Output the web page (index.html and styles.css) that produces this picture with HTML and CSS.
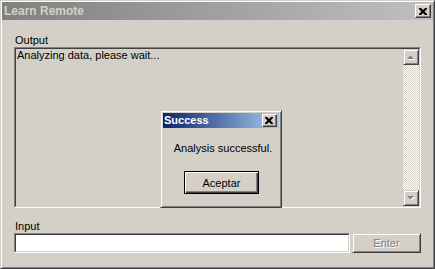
FILE: index.html
```html
<!DOCTYPE html>
<html>
<head>
<meta charset="utf-8">
<link rel="stylesheet" href="styles.css">
</head>
<body>
<div class="window">
  <div class="titlebar">
    <span class="title">Learn Remote</span>
    <div class="cap-btn">
      <svg width="8" height="7" viewBox="0 0 8 7"><path d="M0 0h2l2 2 2-2h2v1l-2.5 2.5L8 6v1H6L4 5 2 7H0V6l2.5-2.5L0 1z" fill="#000"/></svg>
    </div>
  </div>
  <div class="body">
    <div class="label">Output</div>
    <div class="sunken output">
      <div class="sunken-inner output-inner">
        <div class="output-text">Analyzing data, please wait...</div>
        <div class="scrollbar">
          <div class="raised sb-btn">
            <svg width="8" height="5" viewBox="0 0 8 5"><path d="M1 5h7L4.5 1.5z" fill="#fff"/><path d="M0 4h7L3.5 0.5z" fill="#808080"/></svg>
          </div>
          <div class="sb-track"></div>
          <div class="raised sb-btn">
            <svg width="8" height="5" viewBox="0 0 8 5"><path d="M1 1h7L4.5 4.5z" fill="#fff"/><path d="M0 0h7L3.5 3.5z" fill="#808080"/></svg>
          </div>
        </div>
      </div>
    </div>
    <div class="label input-label">Input</div>
    <div class="input-row">
      <div class="sunken input"><div class="sunken-inner input-inner"></div></div>
      <div class="raised btn disabled">Enter</div>
    </div>
  </div>

  <div class="dialog">
    <div class="dlg-title">
      <span class="dlg-title-text">Success</span>
      <div class="cap-btn dlg-cap">
        <svg width="8" height="7" viewBox="0 0 8 7"><path d="M0 0h2l2 2 2-2h2v1l-2.5 2.5L8 6v1H6L4 5 2 7H0V6l2.5-2.5L0 1z" fill="#000"/></svg>
      </div>
    </div>
    <div class="dlg-body">
      <div class="dlg-msg">Analysis successful.</div>
      <div class="default-btn">Aceptar</div>
    </div>
  </div>
</div>
</body>
</html>
```

FILE: styles.css
```css
html, body {
  margin: 0;
  padding: 0;
  background: #d4d0c8;
}
body {
  font-family: "Liberation Sans", Arial, sans-serif;
  font-size: 11px;
  color: #000;
}
.window {
  position: relative;
  width: 435px;
  height: 269px;
  box-sizing: border-box;
  border: 1px solid;
  border-color: #d4d0c8 #404040 #404040 #d4d0c8;
  box-shadow: inset 1px 1px #fff, inset -1px -1px #808080;
  padding: 1px;
  background: #d4d0c8;
  display: flex;
  flex-direction: column;
}
.titlebar {
  height: 18px;
  display: flex;
  align-items: center;
  justify-content: space-between;
  background: linear-gradient(to right, #808080, #c0c0c0);
  padding: 0 2px 0 2px;
}
.title {
  color: #d4d0c8;
  font-weight: bold;
  font-size: 12px;
  line-height: 18px;
}
.cap-btn {
  width: 16px;
  height: 14px;
  box-sizing: border-box;
  background: #d4d0c8;
  border: 1px solid;
  border-color: #fff #404040 #404040 #fff;
  box-shadow: inset -1px -1px #808080;
  display: flex;
  align-items: center;
  justify-content: center;
}
.cap-btn svg {
  display: block;
  margin-left: -1px;
}
.body {
  flex: 1;
  display: flex;
  flex-direction: column;
  padding: 14px 12px 0 12px;
}
.label {
  height: 13px;
  line-height: 13px;
  padding-left: 1px;
}
.input-label {
  margin-top: 12px;
}
.sunken {
  border: 1px solid;
  border-color: #808080 #fff #fff #808080;
}
.sunken-inner {
  border: 1px solid;
  border-color: #404040 #d4d0c8 #d4d0c8 #404040;
  height: 100%;
  box-sizing: border-box;
}
.raised {
  box-sizing: border-box;
  background: #d4d0c8;
  border: 1px solid;
  border-color: #d4d0c8 #404040 #404040 #d4d0c8;
  box-shadow: inset 1px 1px #fff, inset -1px -1px #808080;
}
.output {
  height: 161px;
  box-sizing: border-box;
}
.output-inner {
  display: flex;
}
.output-text {
  flex: 1;
  padding: 0 1px;
  line-height: 13px;
}
.scrollbar {
  width: 16px;
  display: flex;
  flex-direction: column;
}
.sb-btn {
  width: 16px;
  height: 16px;
  display: flex;
  align-items: center;
  justify-content: center;
}
.sb-track {
  flex: 1;
  background: repeating-conic-gradient(#fff 0 25%, #d4d0c8 0 50%) 0 0 / 2px 2px;
}
.input-row {
  display: flex;
  gap: 2px;
  height: 20px;
}
.input {
  flex: 1;
}
.input-inner {
  background: #fff;
}
.btn {
  width: 69px;
  display: flex;
  align-items: center;
  justify-content: center;
}
.disabled {
  color: #808080;
  text-shadow: 1px 1px #fff;
}
.dialog {
  position: absolute;
  left: 159px;
  top: 109px;
  width: 122px;
  height: 98px;
  box-sizing: border-box;
  background: #d4d0c8;
  border: 1px solid;
  border-color: #d4d0c8 #404040 #404040 #d4d0c8;
  box-shadow: inset 1px 1px #fff, inset -1px -1px #808080;
  padding: 2px;
  display: flex;
  flex-direction: column;
}
.dlg-title {
  height: 15px;
  display: flex;
  align-items: center;
  justify-content: space-between;
  background: linear-gradient(to right, #0a246a, #a6caf0);
  padding: 0 2px 0 1px;
}
.dlg-title-text {
  color: #fff;
  font-weight: bold;
  font-size: 11px;
  line-height: 15px;
}
.dlg-cap {
  width: 15px;
  height: 13px;
}
.dlg-body {
  flex: 1;
  display: flex;
  flex-direction: column;
  align-items: center;
}
.dlg-msg {
  margin-top: 14px;
  line-height: 13px;
  padding-left: 4px;
}
.default-btn {
  margin-top: 16px;
  width: 75px;
  height: 23px;
  box-sizing: border-box;
  border: 1px solid #000;
  box-shadow: inset 1px 1px #fff, inset -1px -1px #404040, inset -2px -2px #808080;
  display: flex;
  align-items: center;
  justify-content: center;
  padding-left: 1px;
}
```
